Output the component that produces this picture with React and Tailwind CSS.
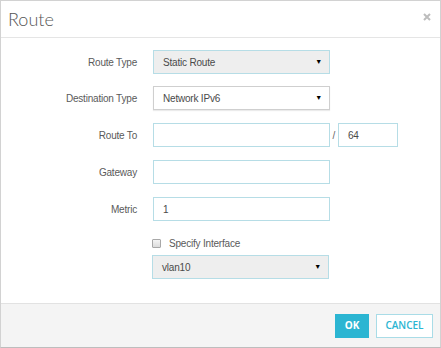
import React from 'react';

const label = 'w-[136px] text-right text-[10px] tracking-[-0.2px] text-[#5a5a5a]';
const field = 'h-[24px] border border-[#b6dde6] bg-white text-[10px] tracking-[-0.2px] text-[#4a4a4a] flex items-center px-[9px]';

function Select({ value, grey = true, plain = false }) {
  return (
    <div
      className={`w-[177px] h-[24px] flex items-center justify-between pl-[9px] pr-[7px] text-[10px] tracking-[-0.2px] text-[#4a4a4a] border ${
        plain ? 'border-[#cfcfcf] bg-white shadow-[0_1px_1px_rgba(0,0,0,0.08)]' : 'border-[#b6dde6]'
      } ${grey ? 'bg-[#eeeeee]' : ''}`}
    >
      <span>{value}</span>
      <span className="text-[7px] text-black">▼</span>
    </div>
  );
}

function Row({ name, children }) {
  return (
    <div className="flex items-center gap-[16px] h-[24px]">
      <div className={label}>{name}</div>
      {children}
    </div>
  );
}

export default function App() {
  return (
    <div
      className="w-[441px] h-[348px] bg-white border border-[#d2d2d2] border-b-[#bdbdbd] flex flex-col"
      style={{ fontFamily: '"Liberation Sans", Arial, sans-serif' }}
    >
      {/* Header */}
      <div className="h-[37px] border-b border-[#e5e5e5] flex items-center justify-between pl-[7px] pr-[9px]">
        <h1 className="text-[18px] font-light text-[#555] pt-[1px]" style={{ fontFamily: 'Lato, sans-serif' }}>
          Route
        </h1>
        <svg width="8" height="8" viewBox="0 0 8 8" className="mb-[5px]">
          <path d="M1 1 L7 7 M7 1 L1 7" stroke="#bdbdbd" strokeWidth="2" />
        </svg>
      </div>

      {/* Body */}
      <div className="flex-1 flex flex-col pt-[12px]">
        <Row name="Route Type">
          <Select value="Static Route" />
        </Row>
        <div className="mt-[12px]">
          <Row name="Destination Type">
            <Select value="Network IPv6" grey={false} plain />
          </Row>
        </div>
        <div className="mt-[13px]">
          <Row name="Route To">
            <div className="flex items-center">
              <div className={`${field} w-[177px]`} />
              <span className="text-[10px] text-[#666] w-[8px] text-center">/</span>
              <div className={`${field} w-[60px]`}>64</div>
            </div>
          </Row>
        </div>
        <div className="mt-[13px]">
          <Row name="Gateway">
            <div className={`${field} w-[177px]`} />
          </Row>
        </div>
        <div className="mt-[13px]">
          <Row name="Metric">
            <div className={`${field} w-[177px]`}>1</div>
          </Row>
        </div>
        <div className="mt-[15px] pl-[151px] flex items-center gap-[8px] h-[15px]">
          <div className="w-[9px] h-[9px] border border-[#a8a8a8] rounded-[1px] bg-gradient-to-b from-[#f4f4f4] to-[#dcdcdc]" />
          <span className="text-[10px] tracking-[-0.2px] text-[#5a5a5a]">Specify Interface</span>
        </div>
        <div className="mt-[4px] pl-[151px]">
          <Select value="vlan10" />
        </div>
      </div>

      {/* Footer */}
      <div className="h-[44px] border-t border-[#e2e2e2] bg-[#f4f4f4] flex items-center justify-end gap-[7px] pr-[7px]">
        <button
          className="w-[34px] h-[24px] bg-[#2bb5d2] text-white text-[10px] font-bold"
          style={{ fontFamily: '"Open Sans", sans-serif' }}
        >
          OK
        </button>
        <button
          className="w-[57px] h-[24px] bg-white border border-[#a9dce7] text-[#2bb5d2] text-[10px] font-semibold"
          style={{ fontFamily: '"Open Sans", sans-serif' }}
        >
          CANCEL
        </button>
      </div>
    </div>
  );
}
